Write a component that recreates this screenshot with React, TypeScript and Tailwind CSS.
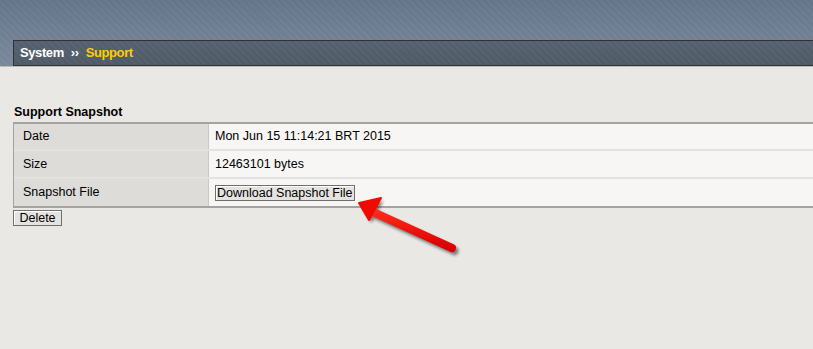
export default function App() {
  const rows = [
    { label: "Date", value: "Mon Jun 15 11:14:21 BRT 2015", h: "h-[27px]" },
    { label: "Size", value: "12463101 bytes", h: "h-[28px]" },
  ];

  return (
    <div className="relative min-h-screen w-full overflow-hidden bg-[#e9e8e4] font-['Liberation_Sans',Arial,sans-serif] text-[12.5px] text-black">
      {/* top banner with breadcrumb */}
      <div className="flex h-[66px] flex-col justify-end bg-[repeating-linear-gradient(45deg,rgba(255,255,255,0.035)_0px,rgba(255,255,255,0.035)_2px,transparent_2px,transparent_5px),linear-gradient(to_bottom,#64758a,#7a899a)]">
        <div className="ml-[13px] flex h-[26px] items-center border-y border-l border-[#2f3338] bg-[repeating-linear-gradient(45deg,rgba(255,255,255,0.03)_0px,rgba(255,255,255,0.03)_2px,transparent_2px,transparent_5px),linear-gradient(to_bottom,#56616f,#4f5a67)] pl-[6px] text-[13px] font-bold tracking-[-0.4px]">
          <span className="text-white">System</span>
          <span className="mx-[7px] text-[13px] text-white">››</span>
          <span className="text-[#ffcc00]">Support</span>
        </div>
      </div>
      <div className="h-px bg-[#bdbcb8]" />

      {/* content */}
      <div className="pl-[13px] pt-[37px]">
        <div className="mb-[1px] ml-px h-[17px] text-[12.5px] font-bold leading-[17px]">Support Snapshot</div>

        <div className="border-y-2 border-l border-[#a3a3a1]">
          {rows.map((r) => (
            <div key={r.label} className={`flex ${r.h} border-b-2 border-[#e2e2e0]`}>
              <div className="flex w-[195px] items-center border-r border-[#c9c8c4] bg-[#dddcd8] pl-[9px]">{r.label}</div>
              <div className="flex flex-1 items-center bg-[#f7f6f4] pl-[6px]">{r.value}</div>
            </div>
          ))}
          <div className="flex h-[27px]">
            <div className="flex w-[195px] items-center border-r border-[#c9c8c4] bg-[#dddcd8] pl-[9px]">Snapshot File</div>
            <div className="flex flex-1 items-center bg-[#f7f6f4] pl-[6px]">
              <button className="h-[16px] whitespace-nowrap border border-[#6f6f6f] bg-[#e4e3e0] px-px text-left text-[12.5px] leading-[14px] shadow-[inset_1px_1px_0_#fff]">
                Download Snapshot File
              </button>
            </div>
          </div>
        </div>

        <button className="mt-[2px] h-[16px] w-[49px] whitespace-nowrap border border-[#6f6f6f] bg-[#e4e3e0] text-[12.5px] leading-[14px] shadow-[inset_1px_1px_0_#fff]">
          Delete
        </button>
      </div>

      {/* red arrow annotation */}
      <svg className="pointer-events-none absolute left-[345px] top-[190px]" width="125" height="75" viewBox="345 190 125 75">
        <defs>
          <filter id="sh" x="-20%" y="-20%" width="140%" height="140%">
            <feGaussianBlur stdDeviation="1.6" />
          </filter>
          <linearGradient id="rg" x1="0" y1="0" x2="0" y2="1">
            <stop offset="0" stopColor="#ff2a1a" />
            <stop offset="1" stopColor="#d90000" />
          </linearGradient>
        </defs>
        <g opacity="0.55" filter="url(#sh)" transform="translate(2.5 3)">
          <line x1="373" y1="212" x2="452" y2="248" stroke="#222" strokeWidth="8" strokeLinecap="round" />
          <polygon points="359,203 381,198 369,220" fill="#222" />
        </g>
        <line x1="373" y1="212" x2="452" y2="248" stroke="url(#rg)" strokeWidth="8" strokeLinecap="round" />
        <polygon points="359,203 381,198 369,220" fill="#f00a00" strokeLinejoin="round" stroke="#f00a00" strokeWidth="2" />
      </svg>
    </div>
  );
}
